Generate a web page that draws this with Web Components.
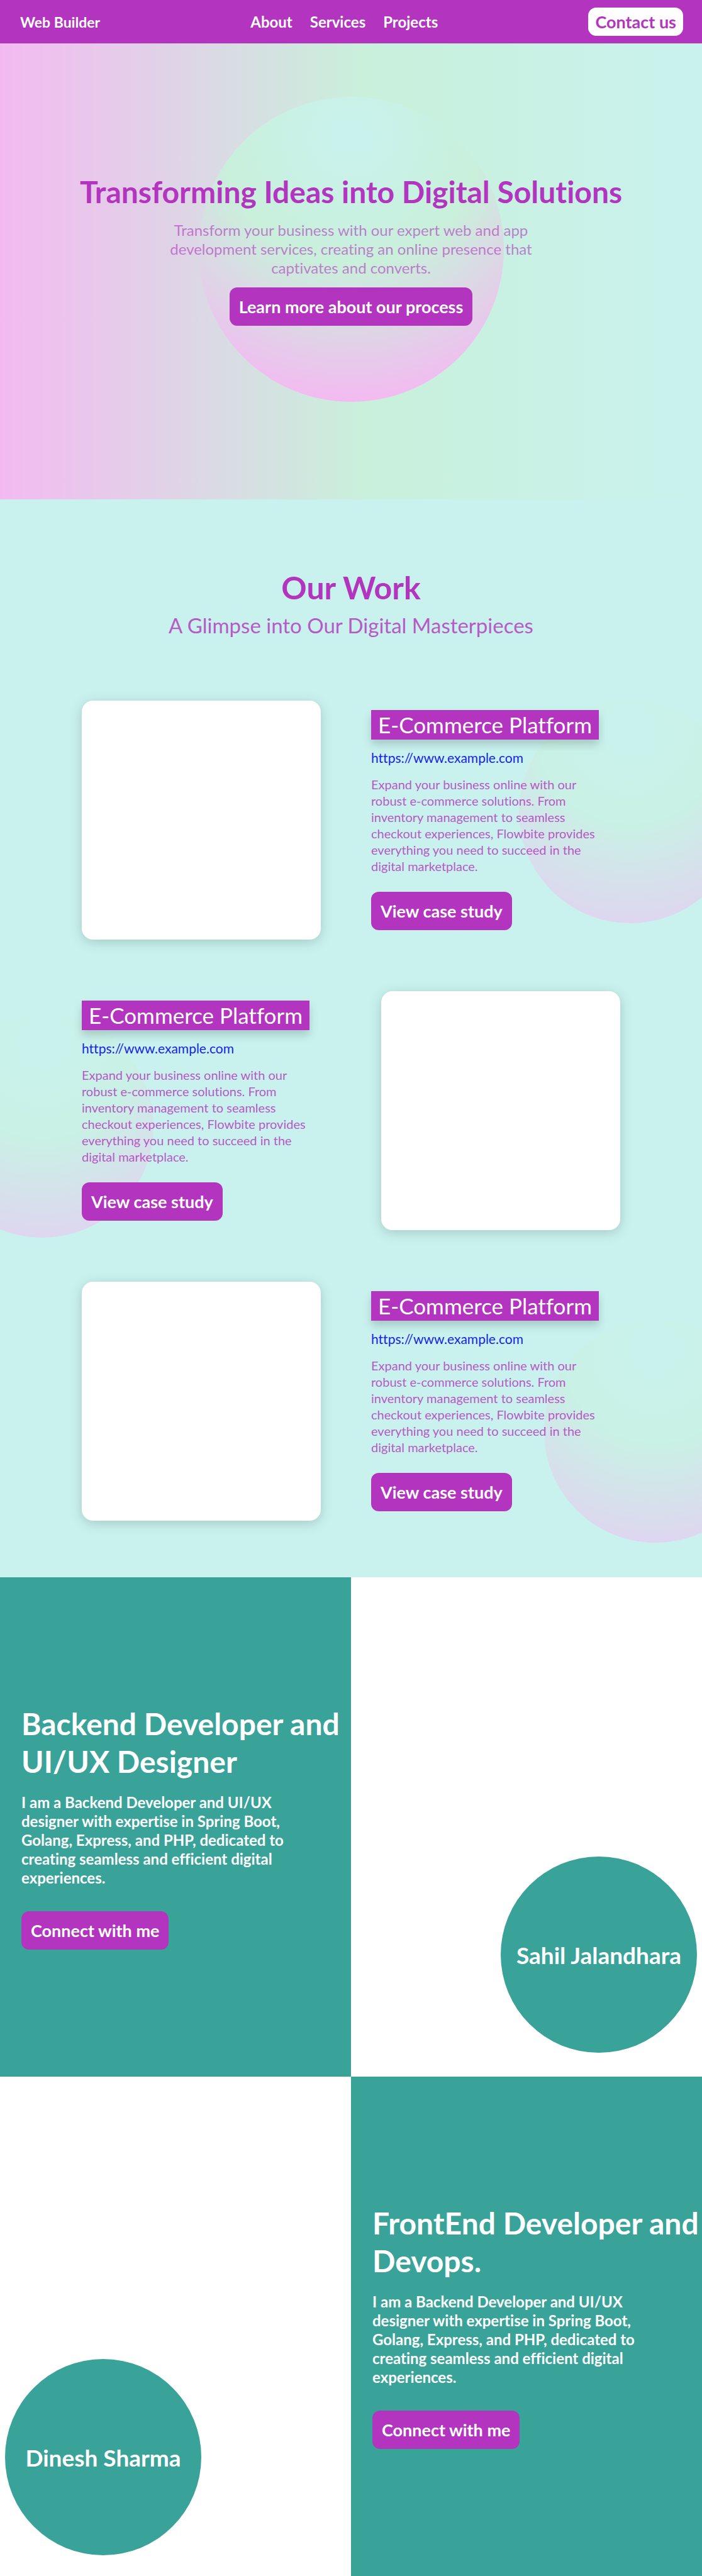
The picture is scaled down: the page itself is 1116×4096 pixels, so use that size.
<!DOCTYPE html>
<html lang="en">
<head>
<meta charset="utf-8">
<meta name="viewport" content="width=device-width, initial-scale=1">
<title>Web Builder</title>
<style>
:root {
  --purple: #b334be;
  --teal: #39a399;
  --pink: #f3baf1;
  --green: #c9f0db;
  --cyan: #c9f2ee;
}
body { margin: 0; background: #fff; font-family: Lato, "Open Sans", sans-serif; font-size: 24px; font-variant-ligatures: none; }
</style>
</head>
<body>
<site-header></site-header>
<main>
  <hero-banner>
    <span slot="title">Transforming Ideas into Digital Solutions</span>
    <span slot="text">Transform your business with our expert web and app development services, creating an online presence that captivates and converts.</span>
    <action-button slot="action">Learn more about our process</action-button>
  </hero-banner>
  <work-section>
    <span slot="title">Our Work</span>
    <span slot="subtitle">A Glimpse into Our Digital Masterpieces</span>
    <project-row style="--orb-top:0px; --orb-right:-63px"></project-row>
    <project-row flip style="--orb-top:38px; --orb-left:-110px"></project-row>
    <project-row style="--orb-top:61px; --orb-right:-103px"></project-row>
  </work-section>
  <developer-panel name="Sahil Jalandhara">Backend Developer and UI/UX Designer</developer-panel>
  <developer-panel name="Dinesh Sharma" flip>FrontEnd Developer and Devops.</developer-panel>
</main>
<script>
const define = (name, html, setup) => {
  const template = document.createElement('template');
  template.innerHTML = html;
  customElements.define(name, class extends HTMLElement {
    constructor() {
      super();
      this.attachShadow({ mode: 'open' }).append(template.content.cloneNode(true));
    }
    connectedCallback() { if (setup) setup(this, this.shadowRoot); }
  });
};

define('action-button', `
<style>
:host { display: inline-block; }
button { display: block; border: 0; border-radius: 12px; padding: 12px 15px; background: var(--purple); color: #fff; font: 700 27px/37px Lato, "Open Sans", sans-serif; font-variant-ligatures: none; white-space: nowrap; cursor: pointer; }
</style>
<button type="button"><slot></slot></button>`);

define('gradient-orb', `
<style>
:host { display: block; aspect-ratio: 1; border-radius: 50%; background: radial-gradient(circle farthest-side at 50% 13%, var(--cyan), var(--green) 48%, var(--pink)); }
</style>`);

define('site-header', `
<style>
:host { display: block; position: sticky; top: 0; z-index: 2; background: var(--purple); color: #fff; }
header { display: flex; align-items: center; justify-content: space-between; padding: 12px 30px 12px 32px; }
nav { display: flex; gap: 28px; }
a { color: inherit; text-decoration: none; font-weight: 700; font-size: 24px; }
.brand { font-size: 23px; }
button { border: 0; border-radius: 13px; padding: 4px 11px; background: #fff; color: var(--purple); font: 700 27px/37px Lato, "Open Sans", sans-serif; cursor: pointer; }
</style>
<header>
  <a class="brand" href="#">Web Builder</a>
  <nav><a href="#about">About</a><a href="#services">Services</a><a href="#projects">Projects</a></nav>
  <button type="button">Contact us</button>
</header>`);

define('hero-banner', `
<style>
:host { display: grid; place-items: center; box-sizing: border-box; min-height: 725px; padding: 0 24px 70px; background: linear-gradient(90deg, var(--pink), var(--green) 52%, var(--cyan)); color: var(--purple); text-align: center; }
gradient-orb, .content { grid-area: 1 / 1; }
gradient-orb { width: 485px; }
.content { display: flex; flex-direction: column; align-items: center; gap: 16px; z-index: 1; }
h1 { margin: 0; font-size: 48px; font-weight: 700; line-height: 60px; }
p { margin: 0; max-width: 600px; font-size: 24px; line-height: 30px; opacity: .6; }
</style>
<gradient-orb></gradient-orb>
<div class="content">
  <h1><slot name="title"></slot></h1>
  <p><slot name="text"></slot></p>
  <slot name="action"></slot>
</div>`);

define('work-section', `
<style>
:host { display: block; overflow: hidden; padding: 108px 0 90px; background: var(--cyan); color: var(--purple); }
.head { display: flex; flex-direction: column; gap: 8px; margin-bottom: 100px; text-align: center; }
h2 { margin: 0; font-size: 50px; font-weight: 700; line-height: 64px; }
p { margin: 0; font-size: 33px; line-height: 40px; opacity: .8; }
.rows { display: flex; flex-direction: column; gap: 82px; }
</style>
<div class="head">
  <h2><slot name="title"></slot></h2>
  <p><slot name="subtitle"></slot></p>
</div>
<div class="rows"><slot></slot></div>`);

define('project-row', `
<style>
:host { display: block; position: relative; }
gradient-orb { position: absolute; width: 354px; top: var(--orb-top); left: var(--orb-left, auto); right: var(--orb-right, auto); opacity: .5; }
article { position: relative; display: flex; align-items: center; gap: 80px; padding: 0 130px; }
:host([flip]) article { flex-direction: row-reverse; }
.preview { flex: 0 0 380px; aspect-ratio: 1; border-radius: 18px; background: #fff; box-shadow: 0 4px 20px rgba(0, 0, 0, .17); }
.info { flex: 1; display: flex; flex-direction: column; align-items: flex-start; gap: 16px; }
h3 { margin: 0; padding: 0 11px; background: var(--purple); color: #fff; font-size: 35px; font-weight: 400; line-height: 47px; white-space: nowrap; box-shadow: 0 8px 13px rgba(0, 0, 0, .17); }
a { color: #1524e6; font-size: 21px; line-height: 26px; text-decoration: none; }
p { margin: 0 0 12px; max-width: 376px; font-size: 20px; line-height: 26px; opacity: .8; }
</style>
<gradient-orb></gradient-orb>
<article>
  <div class="preview"></div>
  <div class="info">
    <h3>E-Commerce Platform</h3>
    <a href="https://www.example.com">https://www.example.com</a>
    <p>Expand your business online with our robust e-commerce solutions. From inventory management to seamless checkout experiences, Flowbite provides everything you need to succeed in the digital marketplace.</p>
    <action-button>View case study</action-button>
  </div>
</article>`);

define('developer-panel', `
<style>
:host { display: grid; grid-template-columns: 1fr 1fr; min-height: 794px; color: #fff; }
.bio, .photo { min-width: 0; box-sizing: border-box; }
.bio { display: flex; flex-direction: column; align-items: flex-start; justify-content: center; padding-left: 34px; background: var(--teal); }
h2 { margin: 0 0 20px; font-size: 48px; font-weight: 700; line-height: 60px; }
p { margin: 0 0 38px; max-width: 440px; font-size: 24px; font-weight: 700; line-height: 30px; }
.photo { display: flex; align-items: flex-end; justify-content: flex-end; padding: 0 8px 38px; background: #fff; }
:host([flip]) .photo { order: -1; justify-content: flex-start; padding-bottom: 33px; }
.badge { display: grid; place-items: center; width: 312px; aspect-ratio: 1; border-radius: 50%; background: var(--teal); font-size: 37px; font-weight: 700; white-space: nowrap; }
</style>
<section class="bio">
  <h2><slot></slot></h2>
  <p>I am a Backend Developer and UI/UX designer with expertise in Spring Boot, Golang, Express, and PHP, dedicated to creating seamless and efficient digital experiences.</p>
  <action-button>Connect with me</action-button>
</section>
<div class="photo"><div class="badge"></div></div>`,
(host, root) => { root.querySelector('.badge').textContent = host.getAttribute('name'); });
</script>
</body>
</html>
